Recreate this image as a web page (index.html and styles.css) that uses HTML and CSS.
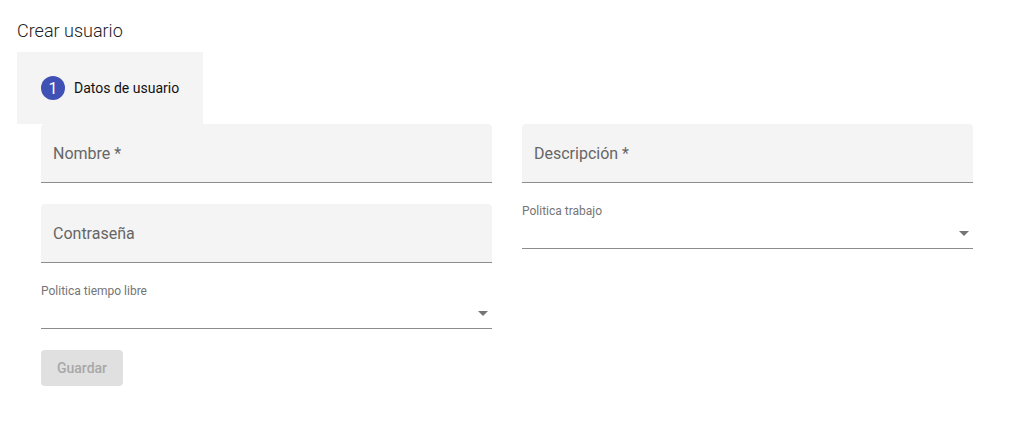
FILE: index.html
```html
<!DOCTYPE html>
<html lang="es">
<head>
  <meta charset="UTF-8" />
  <title>Crear usuario</title>
  <link rel="stylesheet" href="styles.css">
</head>
<body>

  <div class="page">
    <h1 class="page-title">Crear usuario</h1>

    <div class="step-header">
      <span class="step-icon">1</span>
      <span class="step-label">Datos de usuario</span>
    </div>

    <form class="user-form">
      <div class="form-grid">
        <div class="fill-field"><span class="field-label">Nombre *</span></div>
        <div class="fill-field"><span class="field-label">Descripción *</span></div>

        <div class="fill-field"><span class="field-label">Contraseña</span></div>
        <div class="select-field">
          <span class="select-label">Politica trabajo</span>
          <div class="select-value"><span class="select-arrow"></span></div>
        </div>

        <div class="select-field">
          <span class="select-label">Politica tiempo libre</span>
          <div class="select-value"><span class="select-arrow"></span></div>
        </div>
      </div>

      <button type="button" class="save-btn" disabled>Guardar</button>
    </form>
  </div>

</body>
</html>
```

FILE: styles.css
```css
body {
  margin: 0;
  font-family: Roboto, 'Liberation Sans', sans-serif;
  color: #212121;
  background: white;
}

.page {
  padding: 0 17px;
}

.page-title {
  margin: 19px 0 9px 0;
  font-size: 18px;
  font-weight: 300;
  line-height: 24px;
  color: #212121;
}

.step-header {
  display: inline-flex;
  align-items: center;
  gap: 9px;
  height: 72px;
  padding: 0 24px;
  background: #f4f4f4;
  box-sizing: border-box;
}

.step-icon {
  display: flex;
  align-items: center;
  justify-content: center;
  width: 24px;
  height: 24px;
  border-radius: 50%;
  background: #3f51b5;
  color: white;
  font-size: 16px;
}

.step-label {
  font-size: 14px;
  font-weight: 400;
  color: #111;
}

.user-form {
  padding-left: 24px;
}

.form-grid {
  display: grid;
  grid-template-columns: 451px 451px;
  column-gap: 30px;
  row-gap: 21px;
  align-items: start;
}

.fill-field {
  display: flex;
  align-items: center;
  height: 59px;
  padding: 1px 12px 0 12px;
  background: #f4f4f4;
  border-bottom: 1px solid #8c8c8c;
  border-radius: 4px 4px 0 0;
  box-sizing: border-box;
}

.field-label {
  font-size: 16px;
  color: #666;
}

.select-field {
  display: flex;
  flex-direction: column;
  height: 45px;
  border-bottom: 1px solid #8c8c8c;
  box-sizing: border-box;
}

.select-label {
  font-size: 12px;
  line-height: 14px;
  color: #757575;
}

.select-value {
  flex: 1;
  display: flex;
  align-items: center;
  justify-content: flex-end;
  padding-right: 4px;
}

.select-arrow {
  width: 0;
  height: 0;
  border-left: 5px solid transparent;
  border-right: 5px solid transparent;
  border-top: 5px solid #757575;
}

.save-btn {
  margin-top: 21px;
  height: 36px;
  min-width: 64px;
  padding: 0 16px;
  border: none;
  border-radius: 4px;
  background: #e0e0e0;
  color: #a8a8a8;
  font-family: Roboto, 'Liberation Sans', sans-serif;
  font-size: 14px;
  font-weight: 500;
}
```
